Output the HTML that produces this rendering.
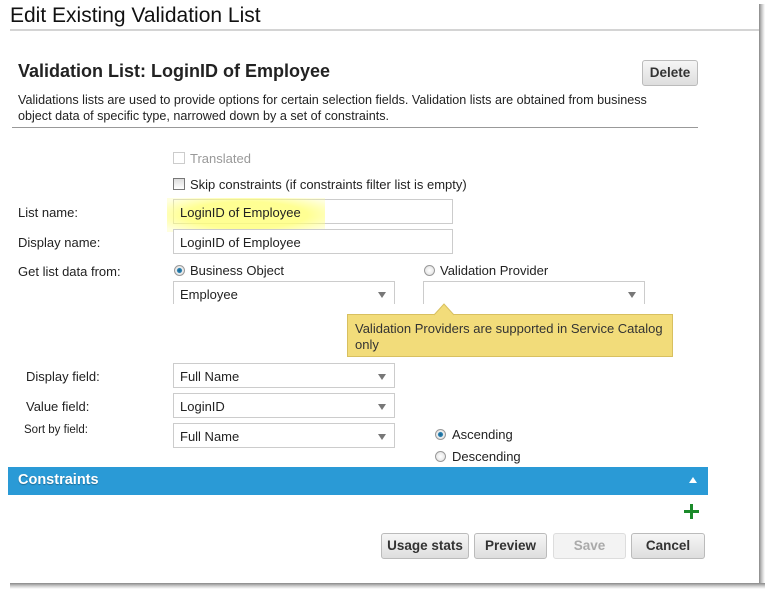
<!DOCTYPE html>
<html><head><meta charset="utf-8"><style>
*{margin:0;padding:0;box-sizing:border-box}
body{width:774px;height:597px;background:#fff;font-family:"Liberation Sans",Arial,sans-serif;color:#222;position:relative;overflow:hidden}
.a{position:absolute;white-space:nowrap}
.f{font-size:13px}
.inp{position:absolute;height:25px;border:1px solid #ccc;background:#fff;font-size:13px;padding:5px 0 0 6px}
.sel:after{content:"";position:absolute;right:8px;top:10px;border-left:4px solid transparent;border-right:4px solid transparent;border-top:6px solid #777}
.rad{position:absolute;width:11px;height:11px;border-radius:50%;border:1px solid #999;background:radial-gradient(circle,#fff 0,#ddd 100%)}
.rad.on{background:radial-gradient(circle,#1a5f8a 0,#2d85b5 35%,#eee 45%,#ddd 100%)}
.btn{position:absolute;height:26px;border:1px solid #bbb;border-radius:3px;background:linear-gradient(#f6f6f6,#dedede);font-size:13.5px;font-weight:bold;color:#333;text-align:center;line-height:24px}
</style></head><body>
<div class="a" style="left:759px;top:4px;width:6px;height:585px;background:linear-gradient(90deg,#888,#ccc 50%,#fff)"></div>
<div class="a" style="left:10px;top:583px;width:755px;height:6px;background:linear-gradient(#888,#ccc 50%,#fff)"></div>
<div class="a" style="left:10px;top:4px;font-size:21px;color:#111">Edit Existing Validation List</div>
<div class="a" style="left:10px;top:29px;width:749px;height:2px;background:#d4d4d4"></div>
<div class="a" style="left:18px;top:61px;font-size:18px;font-weight:bold;color:#222">Validation List: LoginID of Employee</div>
<div class="btn" style="left:642px;top:60px;width:56px">Delete</div>
<div class="a" style="left:18px;top:92px;line-height:16px;font-size:12.6px">Validations lists are used to provide options for certain selection fields. Validation lists are obtained from business<br>object data of specific type, narrowed down by a set of constraints.</div>
<div class="a" style="left:12px;top:127px;width:686px;height:1px;background:#999"></div>
<div class="a" style="left:173px;top:152px;width:12px;height:12px;border:1px solid #ccc"></div>
<div class="a f" style="left:190px;top:151px;color:#999">Translated</div>
<div class="a" style="left:173px;top:178px;width:12px;height:12px;border:1px solid #777;background:linear-gradient(#ddd,#fff)"></div>
<div class="a f" style="left:190px;top:177px">Skip constraints (if constraints filter list is empty)</div>
<div class="a f" style="left:18px;top:205px">List name:</div>
<div class="inp" style="left:173px;top:199px;width:280px"></div>
<div class="a" style="left:167px;top:198px;width:158px;height:34px;background:radial-gradient(ellipse at center,rgba(255,255,120,.8) 55%,rgba(255,255,150,.3) 90%)"></div>
<div class="a f" style="left:180px;top:205px">LoginID of Employee</div>
<div class="a f" style="left:18px;top:235px">Display name:</div>
<div class="inp" style="left:173px;top:229px;width:280px">LoginID of Employee</div>
<div class="a f" style="left:18px;top:264px">Get list data from:</div>
<div class="rad on" style="left:174px;top:265px"></div>
<div class="a f" style="left:190px;top:263px">Business Object</div>
<div class="rad" style="left:424px;top:265px"></div>
<div class="a f" style="left:440px;top:263px">Validation Provider</div>
<div class="inp sel" style="left:173px;top:281px;width:222px;height:23px;border-bottom:none">Employee</div>
<div class="inp sel" style="left:423px;top:281px;width:222px;height:23px;border-bottom:none"></div>
<div class="a" style="left:347px;top:314px;width:326px;height:43px;background:#f2dc7a;border:1px solid #d8c060;font-size:13px;line-height:16px;padding:6px 0 0 7px;color:#333">Validation Providers are supported in Service Catalog<br>only</div>
<svg class="a" style="left:433px;top:303px" width="22" height="13"><path d="M1 12L11 1L21 12" fill="#f2dc7a" stroke="#d8c060"/></svg>
<div class="a f" style="left:26px;top:369px">Display field:</div>
<div class="inp sel" style="left:173px;top:363px;width:222px">Full Name</div>
<div class="a f" style="left:26px;top:399px">Value field:</div>
<div class="inp sel" style="left:173px;top:393px;width:222px">LoginID</div>
<div class="a" style="left:24px;top:424px;font-size:11.5px">Sort by field:</div>
<div class="inp sel" style="left:173px;top:423px;width:222px">Full Name</div>
<div class="rad on" style="left:435px;top:429px"></div>
<div class="a f" style="left:452px;top:427px">Ascending</div>
<div class="rad" style="left:435px;top:451px"></div>
<div class="a f" style="left:452px;top:449px">Descending</div>
<div class="a" style="left:8px;top:467px;width:700px;height:28px;background:#2a9ad6"></div>
<div class="a" style="left:18px;top:472px;font-size:14.5px;font-weight:bold;color:#fff;text-shadow:0 1px 1px rgba(0,0,0,.3)">Constraints</div>
<div class="a" style="left:689px;top:477px;border-left:4px solid transparent;border-right:4px solid transparent;border-bottom:6px solid #fff"></div>
<div class="a" style="left:684px;top:510px;width:15px;height:3px;background:#1a8a2a"></div>
<div class="a" style="left:690px;top:504px;width:3px;height:15px;background:#1a8a2a"></div>
<div class="btn" style="left:381px;top:533px;width:88px">Usage stats</div>
<div class="btn" style="left:474px;top:533px;width:73px">Preview</div>
<div class="btn" style="left:553px;top:533px;width:73px;color:#aaa;border-color:#ddd;background:#f3f3f3">Save</div>
<div class="btn" style="left:631px;top:533px;width:74px">Cancel</div>
</body></html>
